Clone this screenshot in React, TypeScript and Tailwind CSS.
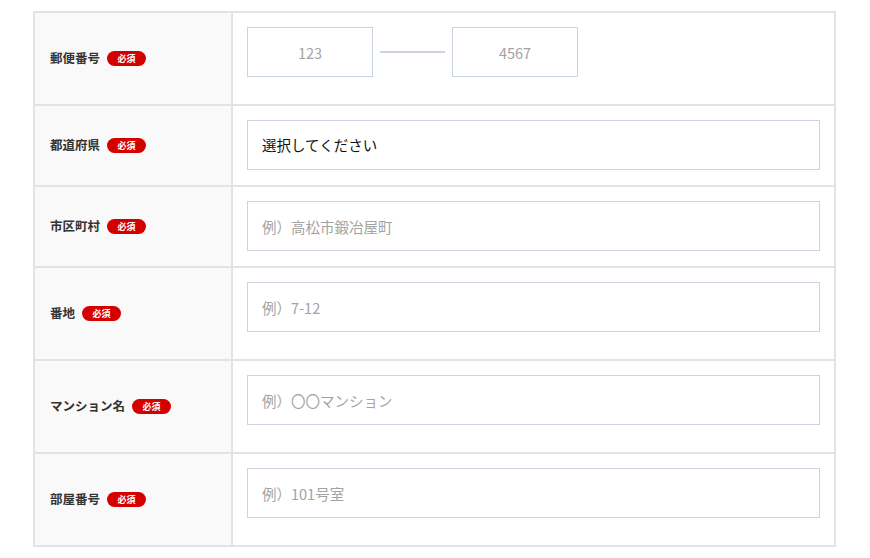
import React from "react";

const font = { fontFamily: '"Noto Sans CJK JP", "Noto Sans", sans-serif' };

function Label({ text }: { text: string }) {
  return (
    <div className="w-[198px] shrink-0 bg-[#f9f9f9] border-r-2 border-[#e3e3e3] flex items-center pl-[15px]">
      <span className="text-[12.5px] font-bold text-[#333333] leading-none">{text}</span>
      <span className="ml-[7px] w-[39px] h-[15px] rounded-full bg-[#d40000] text-white text-[9px] font-bold flex items-center justify-center leading-none">
        必須
      </span>
    </div>
  );
}

function TextInput({ placeholder, className = "" }: { placeholder: string; className?: string }) {
  return (
    <input
      type="text"
      placeholder={placeholder}
      className={
        "h-[50px] border border-[#c9d4e0] bg-white px-[14px] text-[14.5px] text-[#333] placeholder:text-[#a3a3a3] outline-none " +
        className
      }
      style={font}
    />
  );
}

function Row({
  label,
  tall,
  first,
  children,
}: {
  label: string;
  tall?: boolean;
  first?: boolean;
  children: React.ReactNode;
}) {
  return (
    <div className={"flex " + (first ? "" : "border-t-2 border-[#e3e3e3]")}>
      <Label text={label} />
      <div className={"flex-1 pl-[14px] pr-[14px] pt-[14px] " + (tall ? "pb-[27px]" : "pb-[15px]")}>
        {children}
      </div>
    </div>
  );
}

export default function App() {
  return (
    <div className="w-[870px] h-[558px] bg-white pt-[11px] pl-[33px]" style={font}>
      <div className="w-[803px] border-2 border-[#e3e3e3]">
        <Row label="郵便番号" tall first>
          <div className="flex items-center">
            <TextInput placeholder="123" className="w-[126px] text-center" />
            <div className="mx-[7px] w-[65px] h-[2px] bg-[#c9d4e0]" />
            <TextInput placeholder="4567" className="w-[126px] text-center" />
          </div>
        </Row>
        <Row label="都道府県">
          <div className="h-[50px] border border-[#c9d4e0] bg-white px-[14px] flex items-center text-[14.5px] text-[#111]">
            選択してください
          </div>
        </Row>
        <Row label="市区町村">
          <TextInput placeholder="例）高松市鍛冶屋町" className="w-full" />
        </Row>
        <Row label="番地" tall>
          <TextInput placeholder="例）7-12" className="w-full" />
        </Row>
        <Row label="マンション名" tall>
          <TextInput placeholder="例）〇〇マンション" className="w-full" />
        </Row>
        <Row label="部屋番号" tall>
          <TextInput placeholder="例）101号室" className="w-full" />
        </Row>
      </div>
    </div>
  );
}
